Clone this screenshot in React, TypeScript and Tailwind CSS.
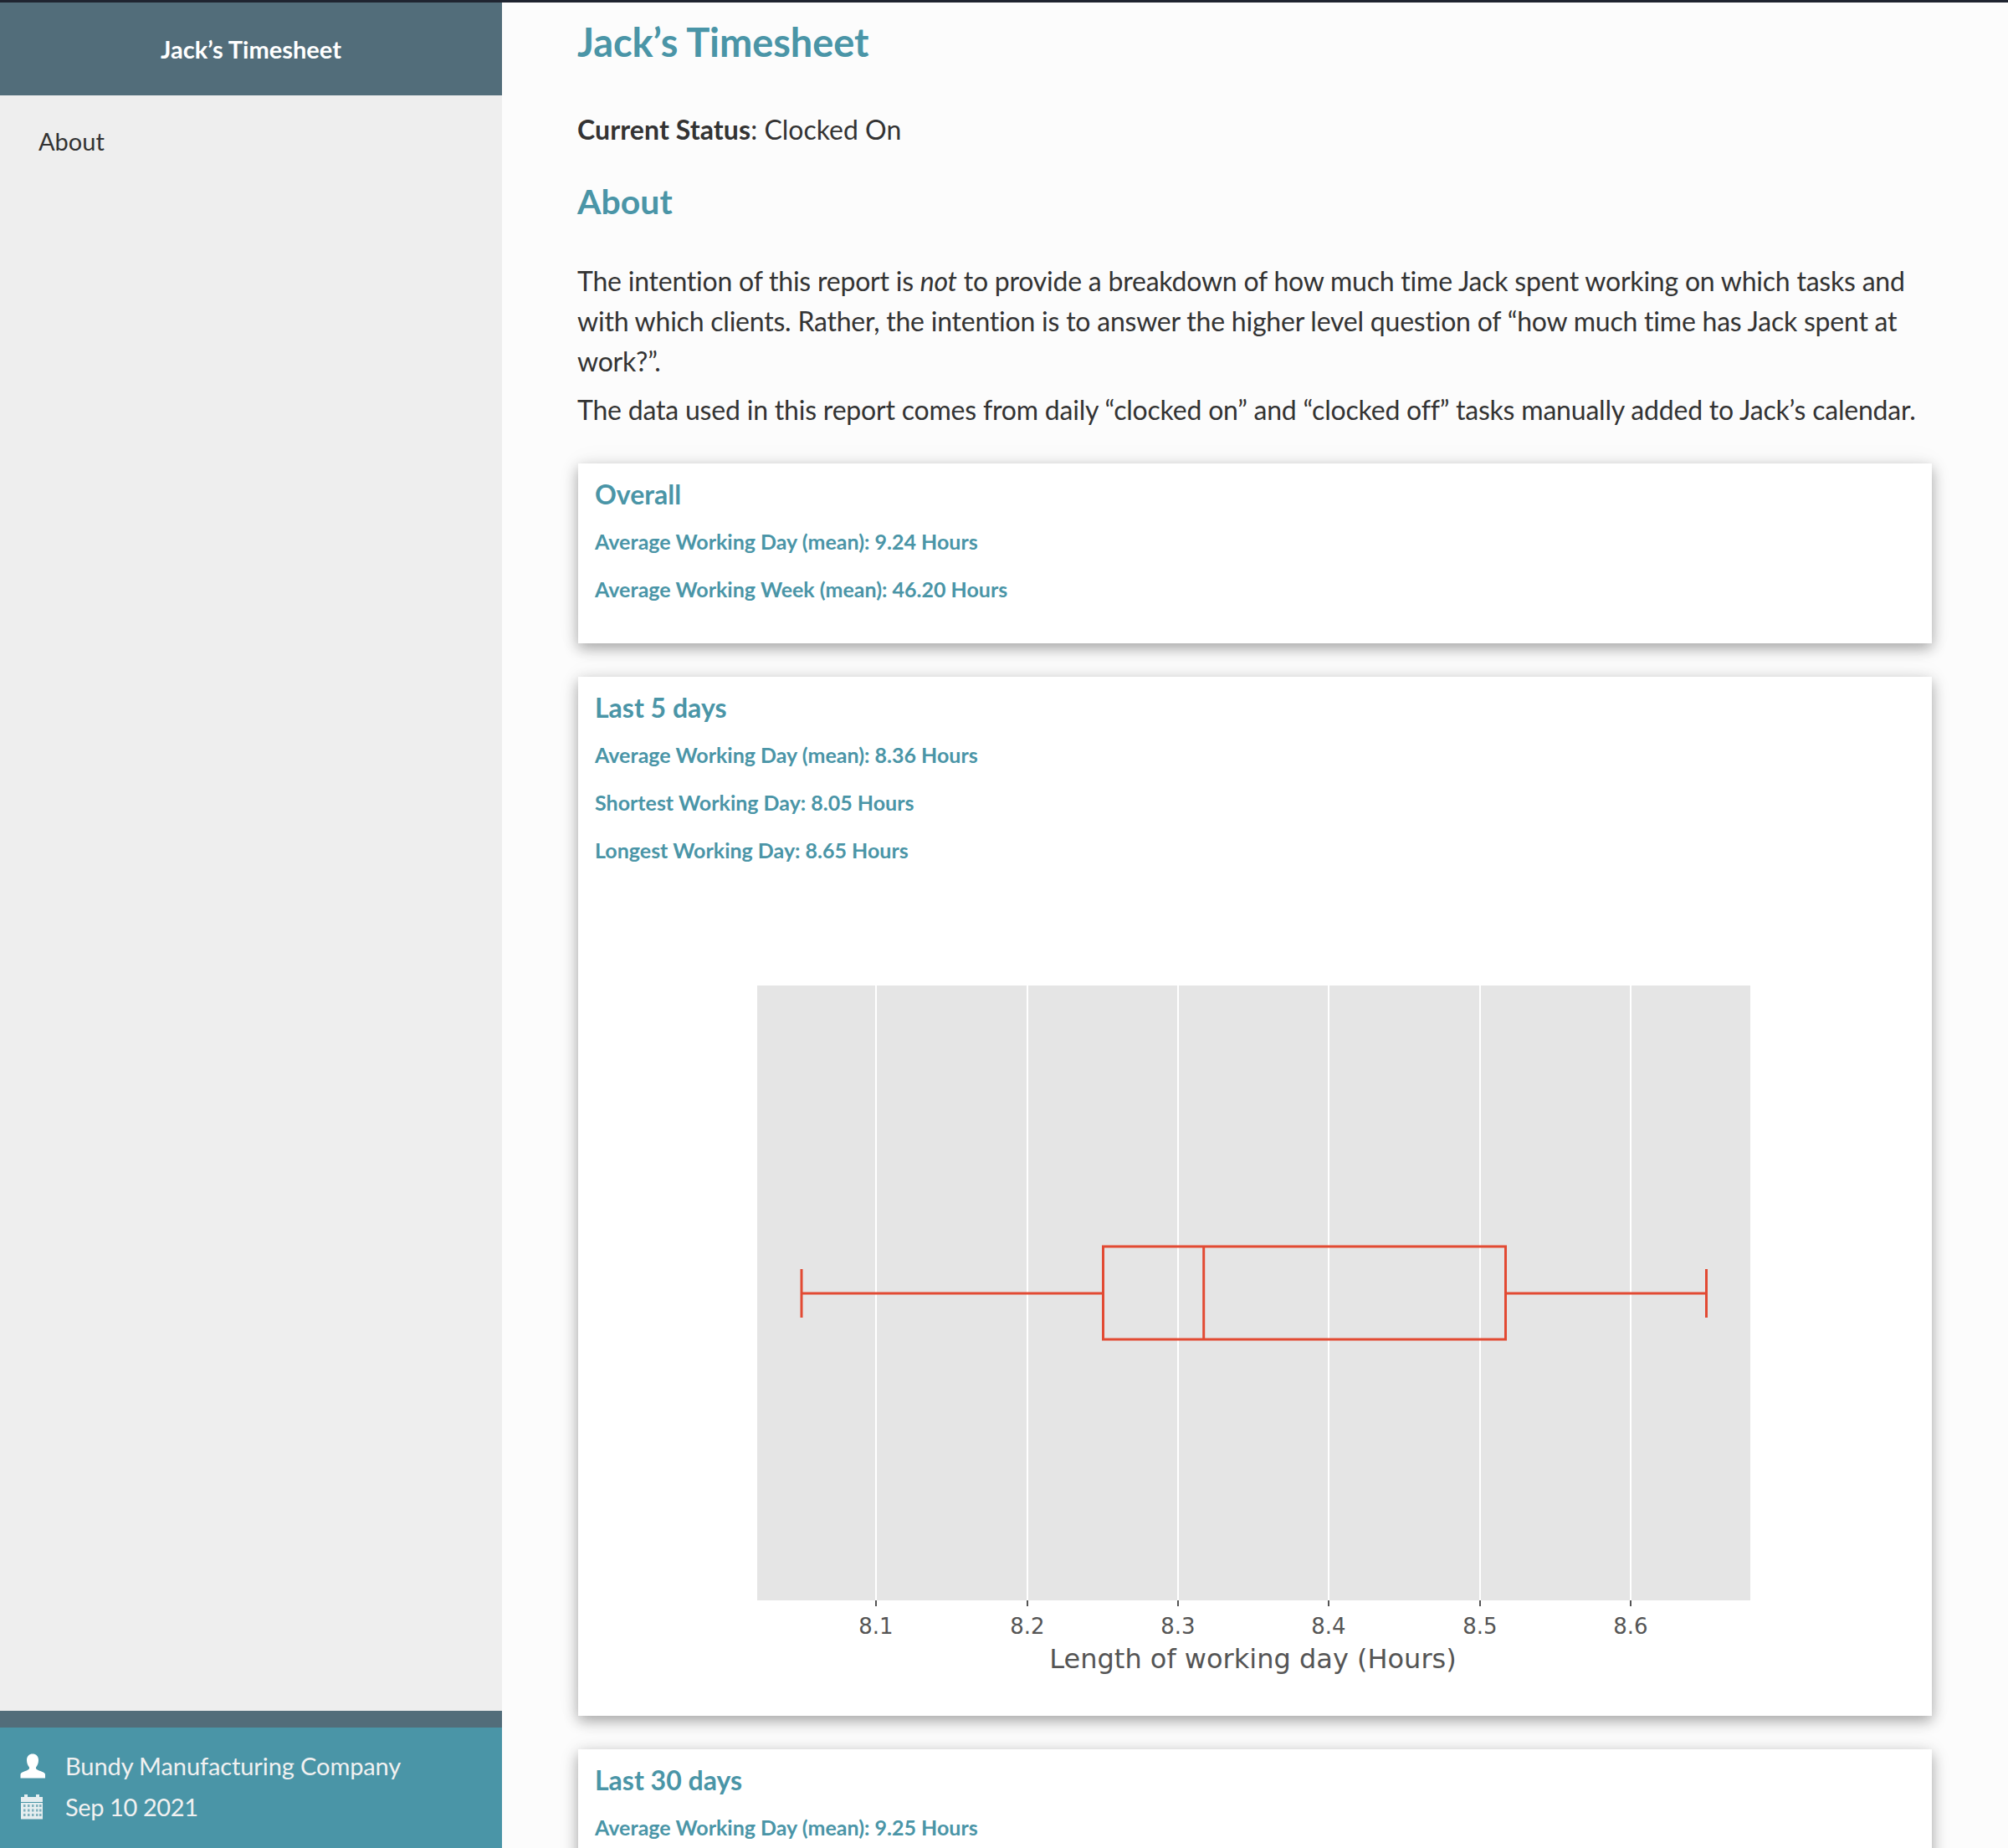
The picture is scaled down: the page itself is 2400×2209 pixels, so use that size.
import React from 'react';

const LATO = "font-['Lato',sans-serif]";

interface StatCardProps {
  title: string;
  stats: string[];
  className?: string;
  children?: React.ReactNode;
}

function UserIcon() {
  return (
    <svg viewBox="0 0 30 30" className="h-[30px] w-[30px] shrink-0 fill-white">
      <path d="M15 0.500c4 0 7 2.500 7 7.500 0 3.500-1.200 6.500-3 8.500v1.500c0 1 3.500 2.500 6.500 3.500 2.500 1 4.500 2 4.500 3.500v4.500H0.500V25c0-1.500 2-2.500 4.500-3.500 3-1 6-2.500 6-3.500v-1.500c-1.800-2-3-5-3-8.500 0-5 3-7.500 7-7.500z" />
    </svg>
  );
}

function CalendarIcon() {
  return (
    <svg viewBox="0 0 28 30" className="h-[30px] w-[28px] shrink-0">
      <path fill="#e6eef0" d="M1 3h4V0h4v3h10V0h4v3h4v6H1z" />
      <rect x="1" y="10" width="26" height="19.500" fill="#e6eef0" />
      {[4, 9, 14, 19, 23].map(x =>
        [12, 17.500, 23].map(y => <rect key={`${x}-${y}`} x={x} y={y} width="2.500" height="3" fill="#7fb0bc" />),
      )}
    </svg>
  );
}

function BoxPlot() {
  const ticks = [
    { x: 1047, label: '8.1' },
    { x: 1228, label: '8.2' },
    { x: 1408, label: '8.3' },
    { x: 1588, label: '8.4' },
    { x: 1769, label: '8.5' },
    { x: 1949, label: '8.6' },
  ];

  return (
    <svg viewBox="691 1100 1618 951" className="block h-[951px] w-[1618px]">
      <rect x="905" y="1178" width="1187" height="735" fill="#e5e5e5" />
      {ticks.map(tick => (
        <g key={tick.label}>
          <line x1={tick.x} x2={tick.x} y1="1178" y2="1913" stroke="#fff" strokeWidth="2" />
          <line x1={tick.x} x2={tick.x} y1="1913" y2="1920" stroke="#555" strokeWidth="2" />
          <text x={tick.x} y="1953" textAnchor="middle" fontFamily="DejaVu Sans" fontSize="26" fill="#555">
            {tick.label}
          </text>
        </g>
      ))}
      <g fill="none" stroke="#e24a33" strokeWidth="3">
        <rect x="1318.500" y="1490" width="481" height="111" />
        <line x1="1438.700" x2="1438.700" y1="1490" y2="1601" />
        <line x1="958" x2="1318.500" y1="1546" y2="1546" />
        <line x1="1799.500" x2="2039.500" y1="1546" y2="1546" />
        <line x1="958" x2="958" y1="1517" y2="1575" />
        <line x1="2039.500" x2="2039.500" y1="1517" y2="1575" />
      </g>
      <text x="1497.500" y="1994" textAnchor="middle" fontFamily="DejaVu Sans" fontSize="32" fill="#555">
        Length of working day (Hours)
      </text>
    </svg>
  );
}

function StatCard({ title, stats, className = '', children }: StatCardProps) {
  return (
    <section
      className={`bg-white shadow-[0_6px_16px_rgba(0,0,0,0.33),0_0_30px_rgba(0,0,0,0.05)] ${className}`}
    >
      <div className="pl-5 pr-5 pt-[14px]">
        <h3 className="text-[32px] font-bold leading-[46px] text-[#4a95a7]">{title}</h3>
        <div className="mt-[14px] flex flex-col gap-[18px]">
          {stats.map(stat => (
            <p key={stat} className="text-[25px] font-bold leading-[39px] text-[#4a95a7]">
              {stat}
            </p>
          ))}
        </div>
      </div>
      {children}
    </section>
  );
}

export default function App() {
  return (
    <div className={`flex h-[2209px] overflow-hidden border-t-[3px] border-[#1f2430] bg-[#fcfcfc] text-[#333] ${LATO}`}>
      <aside className="flex w-[600px] shrink-0 flex-col bg-[#eeeeee]">
        <div className="flex h-[111px] items-center justify-center bg-[#526d7a] text-[29px] font-bold text-white">
          Jack’s Timesheet
        </div>
        <nav className="flex-1 px-[46px] pt-[35px] text-[29px] leading-[40px]">About</nav>
        <div className="h-[20px] bg-[#526d7a]" />
        <div className="flex h-[144px] flex-col gap-[19px] bg-[#4a95a7] px-[24px] pt-[31px] text-[29px] leading-[30px] text-[#f1f1f1]">
          <div className="flex items-center gap-[24px] tracking-[-0.1px]">
            <UserIcon />
            <span>Bundy Manufacturing Company</span>
          </div>
          <div className="flex items-center gap-[26px] tracking-[-0.4px]">
            <CalendarIcon />
            <span>Sep 10 2021</span>
          </div>
        </div>
      </aside>

      <main className="flex-1 pl-[90px] pr-[91px]">
        <h1 className="pt-[20px] text-[47px] font-bold leading-[54px] tracking-[-0.1px] text-[#4a95a7]">
          Jack’s Timesheet
        </h1>
        <p className="mt-[54px] text-[32px] leading-[48px]">
          <strong className="font-bold tracking-[0.1px]">Current Status</strong>: Clocked On
        </p>
        <h2 className="mt-[37px] text-[41px] font-bold leading-[50px] text-[#4a95a7]">About</h2>
        <p className="mt-[46px] text-[32px] leading-[48px] tracking-[-0.22px]">
          The intention of this report is <em>not</em> to provide a breakdown of how much time Jack spent working on
          which tasks and with which clients. Rather, the intention is to answer the higher level question of “how much
          time has Jack spent at work?”.
        </p>
        <p className="mt-[10px] text-[32px] leading-[48px] tracking-[-0.2px]">
          The data used in this report comes from daily “clocked on” and “clocked off” tasks manually added to Jack’s
          calendar.
        </p>

        <div className="ml-px mt-[40px] flex flex-col gap-[40px]">
          <StatCard
            title="Overall"
            stats={['Average Working Day (mean): 9.24 Hours', 'Average Working Week (mean): 46.20 Hours']}
            className="h-[215px]"
          />
          <StatCard
            title="Last 5 days"
            stats={[
              'Average Working Day (mean): 8.36 Hours',
              'Shortest Working Day: 8.05 Hours',
              'Longest Working Day: 8.65 Hours',
            ]}
            className="relative h-[1242px]"
          >
            <div className="absolute bottom-0 left-0">
              <BoxPlot />
            </div>
          </StatCard>
          <StatCard title="Last 30 days" stats={['Average Working Day (mean): 9.25 Hours']} className="h-[600px]" />
        </div>
      </main>
    </div>
  );
}
